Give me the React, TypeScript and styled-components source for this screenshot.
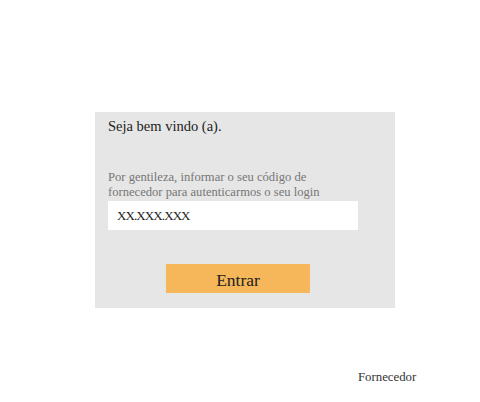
import styled, { createGlobalStyle } from "styled-components";

const GlobalStyle = createGlobalStyle`
  html, body {
    margin: 0;
    padding: 0;
    background: #ffffff;
  }
  body {
    font-family: "Liberation Serif", "DejaVu Serif", serif;
  }
`;

const Page = styled.div`
  width: 480px;
  height: 402px;
  display: flex;
  flex-direction: column;
  box-sizing: border-box;
  padding-top: 112px;
`;

const Card = styled.div`
  margin-left: 95px;
  width: 300px;
  box-sizing: border-box;
  padding: 6px 13px 15px;
  background: #e6e6e6;
  display: flex;
  flex-direction: column;
`;

const Title = styled.h1`
  margin: 0;
  font-size: 14.5px;
  font-weight: normal;
  line-height: 16px;
  color: #222222;
`;

const Hint = styled.p`
  margin: 36px 0 0;
  font-size: 12.6px;
  line-height: 15px;
  color: #767676;
`;

const CodeInput = styled.input`
  margin-top: 1px;
  width: 250px;
  height: 29px;
  box-sizing: border-box;
  border: none;
  outline: none;
  padding: 0 0 0 9px;
  background: #ffffff;
  font-family: "Liberation Serif", serif;
  font-size: 13px;
  letter-spacing: -0.9px;
  color: #222222;

  &::placeholder {
    color: #222222;
  }
`;

const SubmitButton = styled.button`
  margin: 34px 0 0 58px;
  width: 144px;
  height: 29px;
  border: none;
  padding: 4px 0 0;
  background: #f6b65a;
  font-family: "Liberation Serif", serif;
  font-size: 17.5px;
  color: #222222;
  cursor: pointer;
`;

const Footer = styled.div`
  margin-top: 62px;
  padding-left: 358px;
  font-size: 12.8px;
  line-height: 14px;
  color: #333333;
`;

export default function App() {
  return (
    <>
      <GlobalStyle />
      <Page>
        <Card>
          <Title>Seja bem vindo (a).</Title>
          <Hint>
            Por gentileza, informar o seu código de
            <br />
            fornecedor para autenticarmos o seu login
          </Hint>
          <CodeInput type="text" placeholder="XX.XXX.XXX" />
          <SubmitButton type="button">Entrar</SubmitButton>
        </Card>
        <Footer>Fornecedor</Footer>
      </Page>
    </>
  );
}
